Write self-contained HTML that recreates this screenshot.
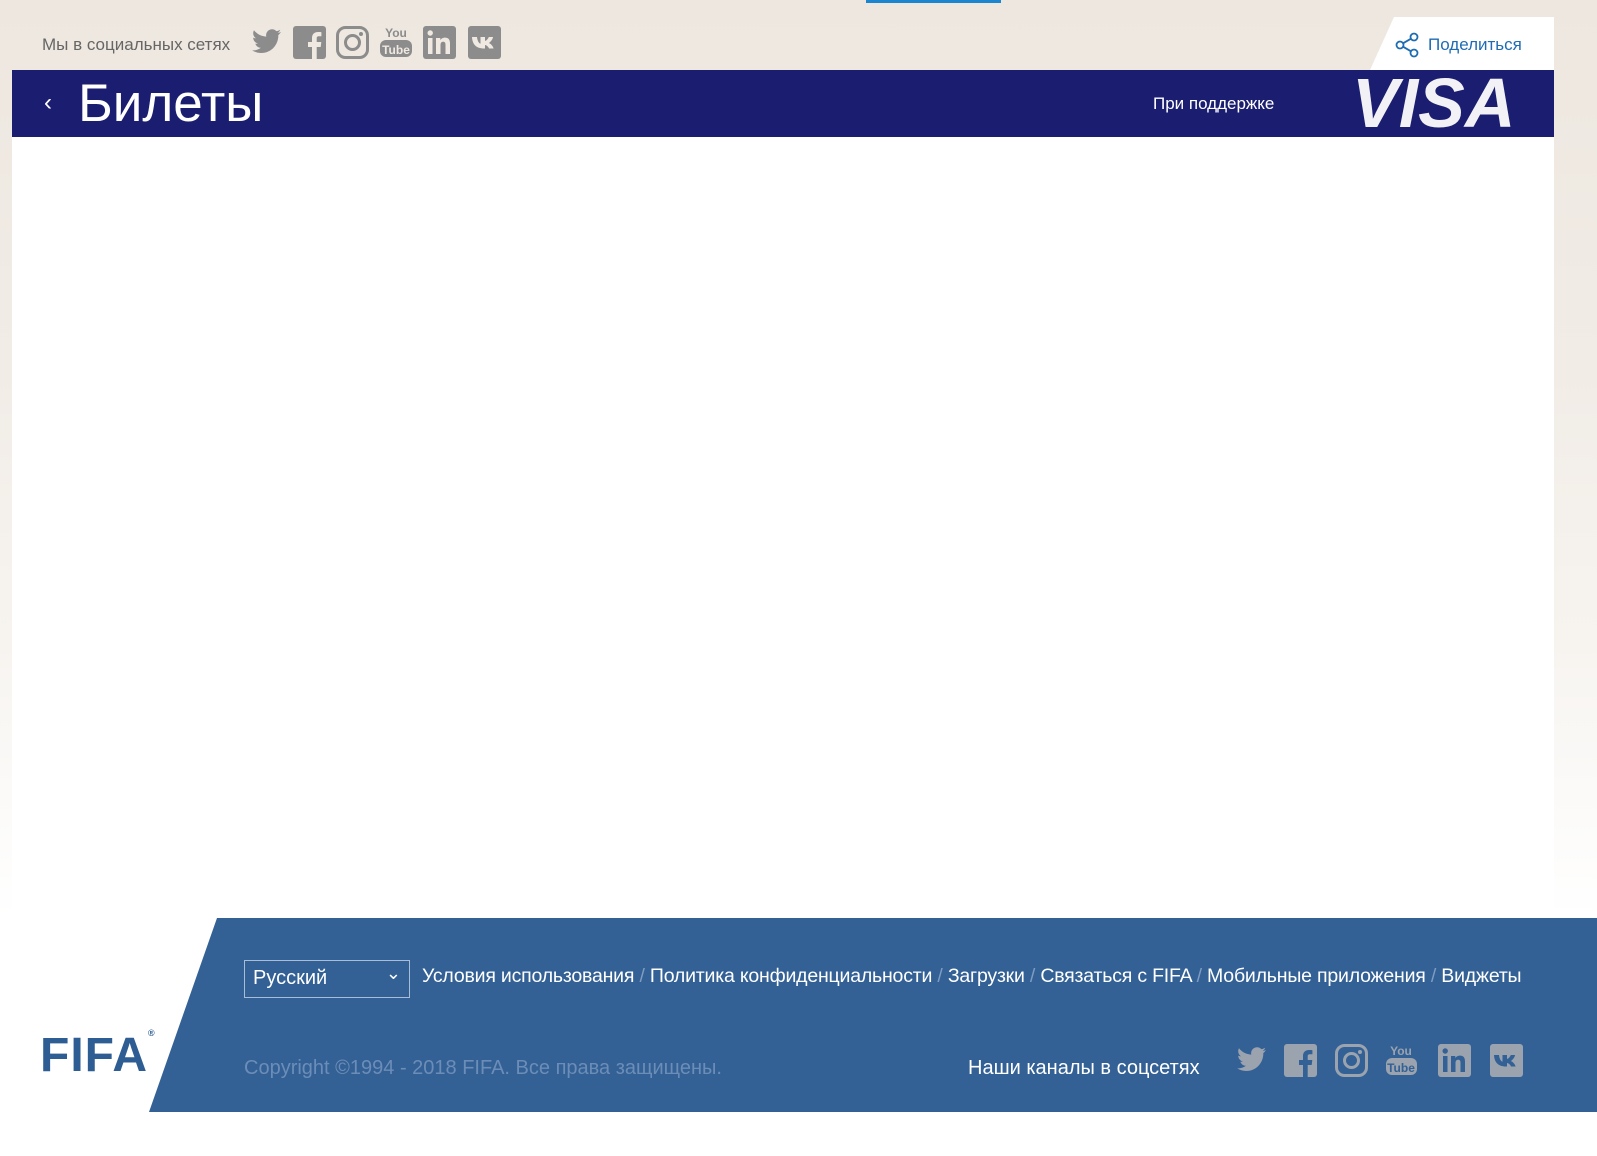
<!DOCTYPE html>
<html><head><meta charset="utf-8"><style>
*{margin:0;padding:0;box-sizing:border-box}
html,body{width:1597px;height:1156px;overflow:hidden;background:#fff;font-family:"Liberation Sans","DejaVu Sans",sans-serif}
.bg{position:absolute;left:0;top:0;width:1597px;height:918px;background:linear-gradient(#ede7df 0%,#f1ece6 40%,#f7f4f0 70%,#fff 100%)}
.abs{position:absolute}
</style></head><body>
<div class="bg"></div>
<div class="abs" style="left:12px;top:137px;width:1542px;height:781px;background:#fff"></div>
<div class="abs" style="left:866px;top:0;width:135px;height:3px;background:#1b85cf"></div>
<div class="abs" style="left:42px;top:35px;font-size:17px;color:#666">Мы в социальных сетях</div>
<svg class="abs" style="left:250px;top:25px" width="255" height="36" viewBox="0 0 255 36">
<g fill="#8c8c8c">
<path d="M31 7c-1.1.5-2.2.8-3.4 1 1.2-.7 2.2-1.9 2.6-3.3-1.1.7-2.4 1.2-3.8 1.4-1.1-1.2-2.6-1.9-4.3-1.9-3.3 0-6 2.7-6 6 0 .5 0 .9.2 1.4C11.3 11.4 6.900 9 4 5.300c-.5.900-.8 1.900-.8 3 0 2.100 1.100 3.900 2.700 5-1 0-1.900-.3-2.700-.7 0 2.900 2.100 5.300 4.800 5.900-.5.100-1 .2-1.600.2-.4 0-.8 0-1.100-.1.800 2.400 3 4.100 5.600 4.200-2.100 1.600-4.700 2.600-7.500 2.600-.5 0-1 0-1.400-.1 2.700 1.700 5.800 2.700 9.200 2.700 11 0 17.100-9.100 17.100-17.100v-.8C29.200 9.300 30.200 8.200 31 7z"/>
<rect x="43" y="1" width="33" height="33" rx="3"/>
<path d="M62 34V22h-4v-5h4v-4c0-4 2.500-6 6-6 1.600 0 3 .1 3.400.2v4h-2.400c-1.900 0-2.300.9-2.300 2.200V17h4.600l-.6 5H66.700v12z" fill="#efe9e2"/>
<rect x="87.5" y="2.5" width="30" height="30" rx="8" fill="none" stroke="#8c8c8c" stroke-width="3"/>
<circle cx="102.5" cy="17.5" r="7" fill="none" stroke="#8c8c8c" stroke-width="3"/>
<circle cx="111" cy="9" r="2"/>
<text x="146" y="12" font-family="Liberation Sans,sans-serif" font-size="12" text-anchor="middle" font-weight="bold">You</text>
<rect x="130" y="15" width="32" height="17" rx="6"/>
<text x="146" y="29" font-family="Liberation Sans,sans-serif" font-size="12" text-anchor="middle" fill="#efe9e2" font-weight="bold">Tube</text>
<rect x="173" y="1" width="33" height="33" rx="3"/>
<rect x="218" y="1" width="33" height="33" rx="3"/>
</g>
<g fill="#efe9e2"><rect x="178" y="13" width="4.500" height="16"/><circle cx="180.200" cy="8" r="2.700"/><path d="M186 13h4.300v2.200c.8-1.500 2.500-2.600 4.700-2.600 4 0 5 2.500 5 6V29h-4.500v-9c0-2-.5-3.200-2.300-3.200-1.900 0-2.700 1.300-2.700 3.300V29H186z"/>
<path d="M222 12h5c.3 3 1.500 6 3.500 6.800V12h4.500v4c1.500-.4 3-2 3.800-4h4.300c-.6 2.800-2.600 5-4.300 6 1.800.7 4 2.700 4.800 5.500h-4.600c-.7-2-2.400-3.300-4-3.500v3.500h-1C226 23.500 222.300 19 222 12z"/></g>
</svg>
<svg class="abs" style="left:1370px;top:17px" width="184" height="53"><path d="M24 0H184V53H0z" fill="#fff"/></svg>
<svg class="abs" style="left:1395px;top:32px" width="26" height="26" viewBox="0 0 26 26" fill="none" stroke="#1e6cb3" stroke-width="1.800"><circle cx="5" cy="13" r="3.500"/><circle cx="19" cy="5" r="3.500"/><circle cx="19" cy="21" r="3.500"/><path d="M8 11.300l8-4.600M8 14.700l8 4.600"/></svg>
<div class="abs" style="left:1428px;top:35px;font-size:17px;color:#1e6cb3">Поделиться</div>
<div class="abs" style="left:12px;top:70px;width:1542px;height:67px;background:#1b1e70"></div>
<div class="abs" style="left:44px;top:89px;font-size:24px;color:#fff">‹</div>
<div class="abs" style="left:78px;top:73px;font-size:53px;color:#fff">Билеты</div>
<div class="abs" style="left:1153px;top:94px;font-size:17px;color:#fff">При поддержке</div>
<div class="abs" style="left:1352px;top:63px;font-size:70px;font-weight:bold;font-style:italic;color:#f2f2f6;letter-spacing:0px">VISA</div>
<svg class="abs" style="left:0;top:918px" width="1597" height="194"><path d="M217 0H1597V194H149z" fill="#336195"/></svg>
<div class="abs" style="left:244px;top:960px;width:166px;height:38px;border:1px solid #a9bed6;color:#fff;font-size:20px;padding:6px 8px">Русский<span style="position:absolute;right:8px;top:2px;font-size:18px">⌄</span></div>
<div class="abs" style="left:422px;top:965px;font-size:19.5px;color:#fff;letter-spacing:-0.2px;white-space:nowrap">Условия использования <span style="color:#7f9cc2">/</span> Политика конфиденциальности <span style="color:#7f9cc2">/</span> Загрузки <span style="color:#7f9cc2">/</span> Связаться с FIFA <span style="color:#7f9cc2">/</span> Мобильные приложения <span style="color:#7f9cc2">/</span> Виджеты</div>
<div class="abs" style="left:244px;top:1057px;font-size:20px;color:#6c8db7">Copyright ©1994 - 2018 FIFA. Все права защищены.</div>
<div class="abs" style="left:968px;top:1057px;font-size:20px;color:#fff">Наши каналы в соцсетях</div>
<svg class="abs" style="left:1234px;top:1043px" width="292" height="36" viewBox="0 0 292 36">
<g fill="#9aa3ae">
<path d="M32 7c-1.100.5-2.200.8-3.400 1 1.200-.7 2.200-1.900 2.600-3.300-1.100.7-2.400 1.200-3.800 1.400-1.100-1.200-2.600-1.900-4.300-1.900-3.300 0-6 2.700-6 6 0 .5 0 .9.2 1.400C12.300 11.400 7.900 9 5 5.300c-.5.900-.8 1.900-.8 3 0 2.100 1.100 3.900 2.700 5-1 0-1.900-.3-2.700-.7 0 2.900 2.100 5.300 4.800 5.900-.5.100-1 .2-1.600.2-.4 0-.8 0-1.100-.1.800 2.400 3 4.100 5.600 4.200-2.100 1.600-4.700 2.600-7.500 2.600-.5 0-1 0-1.400-.1 2.700 1.700 5.800 2.700 9.200 2.700 11 0 17.100-9.100 17.100-17.100v-.8C30.200 9.300 31.200 8.200 32 7z"/>
<rect x="50" y="1" width="33" height="33" rx="3"/>
<path d="M69 34V22h-4v-5h4v-4c0-4 2.500-6 6-6 1.600 0 3 .1 3.400.2v4h-2.400c-1.900 0-2.300.9-2.300 2.200V17h4.600l-.6 5H73.700v12z" fill="#336195"/>
<rect x="102.500" y="2.500" width="30" height="30" rx="8" fill="none" stroke="#9aa3ae" stroke-width="3"/>
<circle cx="117.500" cy="17.500" r="7" fill="none" stroke="#9aa3ae" stroke-width="3"/>
<circle cx="126" cy="9" r="2"/>
<text x="167" y="12" font-family="Liberation Sans,sans-serif" font-size="12" text-anchor="middle" font-weight="bold">You</text>
<rect x="152" y="15" width="31" height="17" rx="6"/>
<text x="167" y="29" font-family="Liberation Sans,sans-serif" font-size="12" text-anchor="middle" fill="#336195" font-weight="bold">Tube</text>
<rect x="204" y="1" width="33" height="33" rx="3"/>
<rect x="256" y="1" width="33" height="33" rx="3"/>
</g>
<g fill="#336195"><rect x="209" y="13" width="4.500" height="16"/><circle cx="211.200" cy="8" r="2.700"/><path d="M217 13h4.300v2.200c.8-1.500 2.500-2.600 4.700-2.600 4 0 5 2.500 5 6V29h-4.500v-9c0-2-.5-3.200-2.300-3.200-1.900 0-2.700 1.300-2.700 3.300V29H217z"/>
<path d="M260 12h5c.3 3 1.500 6 3.500 6.800V12h4.500v4c1.500-.4 3-2 3.800-4h4.300c-.6 2.800-2.600 5-4.300 6 1.800.7 4 2.700 4.800 5.500h-4.600c-.7-2-2.400-3.300-4-3.500v3.500h-1C264 23.500 260.300 19 260 12z"/></g>
</svg>
<div class="abs" style="left:40px;top:1028px;font-size:48px;font-weight:bold;color:#2e5d93;letter-spacing:1px">FIFA<span style="font-size:9px;vertical-align:top">®</span></div>
</body></html>
